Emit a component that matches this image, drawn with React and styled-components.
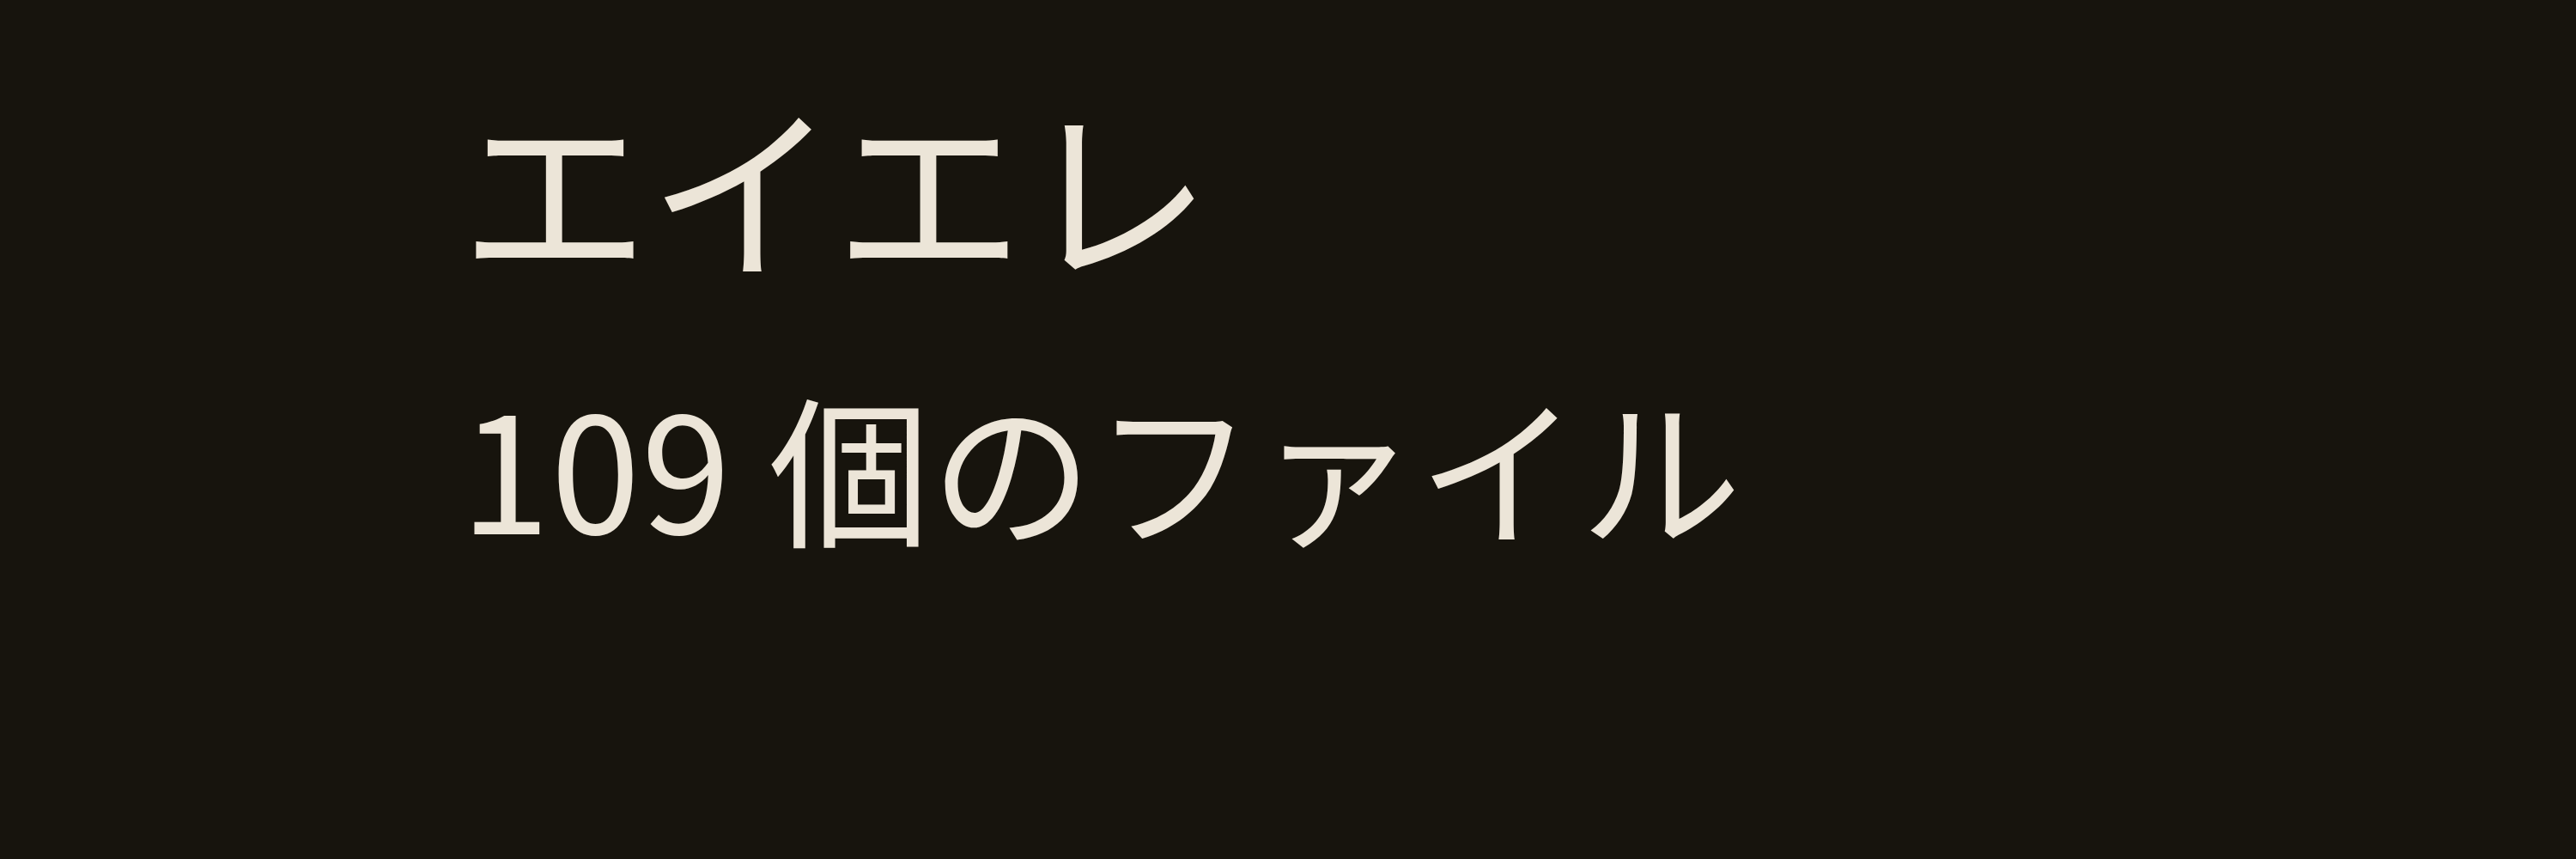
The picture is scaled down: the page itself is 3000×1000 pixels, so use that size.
import React from 'react'
import styled, { createGlobalStyle } from 'styled-components'

const GlobalStyle = createGlobalStyle`
    html, body {
        margin: 0;
        padding: 0;
        background-color: #17140d;
    }
`

const Tela = styled.div`
    box-sizing: border-box;
    width: 100vw;
    height: 100vh;
    background-color: #17140d;
    padding: 104px 0 0 536px;
    display: flex;
    flex-direction: column;
    gap: 122px;
    font-family: "Noto Sans CJK JP", "Noto Sans", sans-serif;
    color: #ece5d8;
`

const Titulo = styled.h1`
    margin: 0;
    font-size: 220px;
    font-weight: 400;
    line-height: 1;
    letter-spacing: -1px;
`

const Contagem = styled.p`
    margin: 0;
    font-size: 188px;
    font-weight: 400;
    line-height: 1;
    letter-spacing: 1px;
`

export default function App() {
    return (
        <>
            <GlobalStyle />
            <Tela>
                <Titulo>エイエレ</Titulo>
                <Contagem>109 個のファイル</Contagem>
            </Tela>
        </>
    )
}
